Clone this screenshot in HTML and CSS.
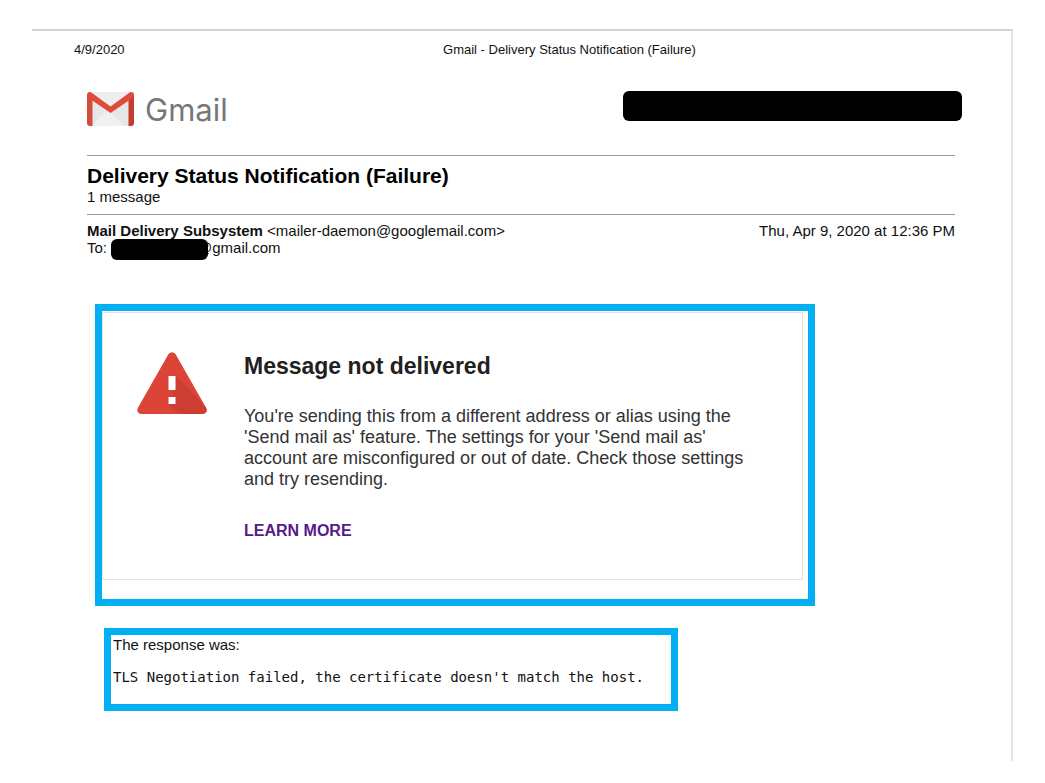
FILE: index.html
```html
<!DOCTYPE html>
<html lang="en">
<head>
  <meta charset="UTF-8" />
  <meta name="viewport" content="width=device-width, initial-scale=1.0"/>
  <title>Gmail - Delivery Status Notification (Failure)</title>
  <link rel="stylesheet" href="styles.css">
</head>
<body>

<div class="page">
  <div class="print-header">
    <span class="print-date">4/9/2020</span>
    <span class="print-title">Gmail - Delivery Status Notification (Failure)</span>
  </div>

  <main class="content">
    <header class="brand">
      <div class="logo">
        <svg class="logo-icon" viewBox="0 0 47 34" aria-hidden="true">
          <rect x="1" y="0" width="45" height="34" rx="2" fill="#eeeeee"/>
          <path d="M5 34 L23.500 18 L42 34 Z" fill="#f1f1f1"/>
          <path d="M5 9 L18 19 L5 33 Z" fill="#e6e6e6"/>
          <path d="M23.500 21 L42 8 V34 H37 Z" fill="#e7e7e7"/>
          <path d="M0 3 L5.500 7 V34 H3 Q0 34 0 31 Z" fill="#d54b3d"/>
          <path d="M47 3 L41.500 7 V34 H44 Q47 34 47 31 Z" fill="#c33c2d"/>
          <path d="M0 3 Q0 0 3 0 Q4 0 5 1 L23.500 14.500 L42 1 Q43 0 44 0 Q47 0 47 3 Q47 5 45.500 6 L23.500 21 L1.500 6 Q0 5 0 3 Z" fill="#de4a3c"/>
        </svg>
        <span class="logo-text">Gmail</span>
      </div>
      <div class="redacted redacted-account"></div>
    </header>

    <section class="subject">
      <h1>Delivery Status Notification (Failure)</h1>
      <p>1 message</p>
    </section>

    <section class="envelope">
      <div>
        <p><strong>Mail Delivery Subsystem</strong> &lt;mailer-daemon@googlemail.com&gt;</p>
        <p class="recipient">To: <span class="redacted redacted-user"></span>@gmail.com</p>
      </div>
      <time datetime="2020-04-09T12:36">Thu, Apr 9, 2020 at 12:36 PM</time>
    </section>

    <section class="highlight highlight-notice">
      <div class="notice">
        <svg class="notice-icon" viewBox="0 0 70 62" aria-hidden="true">
          <path d="M31.500 2 Q35 -1.500 38.500 2 L69.200 56 Q71 61 66 62 H4 Q-1 61 0.800 56 Z" fill="#db4437"/>
          <path d="M38.500 24 L67 53 L69.200 56 Q71 61 66 62 H42 L31.500 52 V45 L36 43 Z" fill="#c93d31" opacity="0.8"/>
          <rect x="31.500" y="24" width="7" height="14" fill="#fff"/>
          <rect x="31.500" y="45" width="7" height="7" fill="#fff"/>
        </svg>
        <div class="notice-body">
          <h2>Message not delivered</h2>
          <p>You're sending this from a different address or alias using the 'Send mail as' feature. The settings for your 'Send mail as' account are misconfigured or out of date. Check those settings and try resending.</p>
          <a href="#">LEARN MORE</a>
        </div>
      </div>
    </section>

    <section class="highlight highlight-response">
      <p>The response was:</p>
      <pre>TLS Negotiation failed, the certificate doesn't match the host.</pre>
    </section>
  </main>
</div>

</body>
</html>
```
FILE: styles.css
```css
* {
  box-sizing: border-box;
}
body {
  display: flex;
  flex-direction: column;
  min-height: 100vh;
  margin: 0;
  padding: 29px 32px 22px;
  background: #fff;
  color: #111;
  font-family: "Liberation Sans", Arial, sans-serif;
  font-size: 15px;
  line-height: 17px;
}
h1, h2, p, pre {
  margin: 0;
}
.page {
  flex: 1;
  border-top: 2px solid #d4d4d4;
  border-right: 2px solid #e4e4e4;
}
.print-header {
  display: flex;
  padding: 10px 0 0 42px;
  font-size: 13px;
}
.print-date {
  width: 54px;
}
.print-title {
  flex: 1;
  text-align: center;
}
.content {
  padding: 33px 56px 0 55px;
}

/* Logo and account */
.brand {
  display: flex;
  justify-content: space-between;
  height: 64px;
}
.logo {
  display: flex;
  gap: 11px;
  padding-top: 1px;
}
.logo-icon {
  width: 47px;
  height: 34px;
}
.logo-text {
  color: #777;
  font-family: Inter, sans-serif;
  font-size: 31px;
  line-height: 36px;
}
.redacted {
  background: #000;
  border-radius: 6px;
}
.redacted-account {
  width: 339px;
  height: 30px;
  margin-right: -7px;
}

/* Subject and sender */
.subject {
  height: 59px;
  padding-top: 8px;
  border-top: 1px solid #999;
}
.subject h1 {
  color: #000;
  font-size: 21px;
  line-height: 24px;
}
.envelope {
  display: flex;
  justify-content: space-between;
  padding-top: 7px;
  border-top: 1px solid #999;
}
.recipient {
  display: flex;
  height: 21px;
}
/* sits over the start of the address */
.redacted-user {
  position: relative;
  width: 97px;
  height: 21px;
  margin: 0 -11px 0 4px;
}

/* Blue frames */
.highlight {
  border: 7px solid #00b0f0;
}
.highlight-notice {
  max-width: 720px;
  margin: 44px 0 0 8px;
  padding: 1px 5px 19px 0;
}
.highlight-response {
  max-width: 574px;
  margin: 22px 0 0 17px;
  padding: 1px 2px 18px;
}
.highlight-response pre {
  margin-top: 16px;
  font-family: "DejaVu Sans Mono", monospace;
  font-size: 14px;
}

/* Notice card */
.notice {
  display: flex;
  gap: 37px;
  padding: 39px 40px 38px 34px;
  border: 1px solid #e3e3e3;
}
.notice-icon {
  flex: none;
  width: 70px;
  height: 62px;
}
.notice h2 {
  color: #212121;
  font-size: 23px;
  line-height: 28px;
}
.notice p {
  margin: 26px 0 31px;
  color: #333;
  font-size: 18px;
  line-height: 21px;
}
.notice a {
  color: #551a8b;
  font-size: 16px;
  font-weight: bold;
  line-height: 20px;
  text-decoration: none;
}
```
